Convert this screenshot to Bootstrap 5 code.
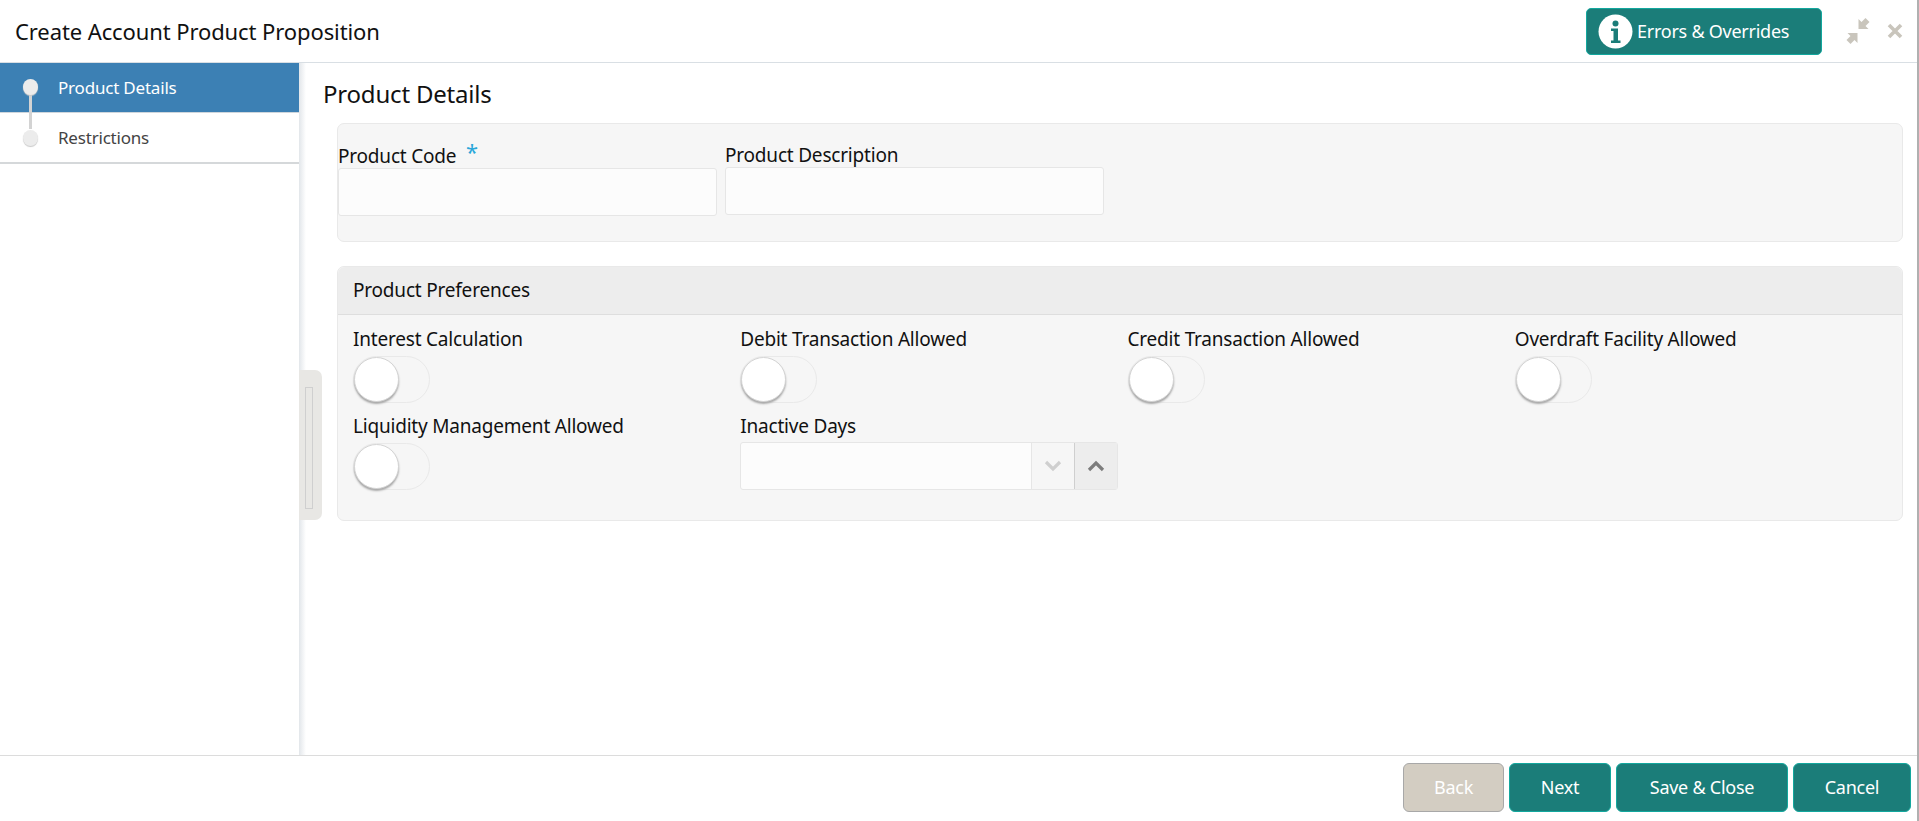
<!doctype html>
<html lang="en"><head><meta charset="utf-8"><title>Create Account Product Proposition</title>
<link rel="stylesheet" href="https://cdn.jsdelivr.net/npm/bootstrap@5.3.0/dist/css/bootstrap.min.css">
<style>
html,body{height:100%;overflow:hidden}
body{font-family:"Noto Sans","Open Sans",sans-serif;color:#111;background:#fff}
.shell{height:821px;border-right:2px solid #b0b0b0}
.top-bar{height:63px;border-bottom:1px solid #d9dfe4;padding:0 14px 0 15px}
.page-title{font-size:22px;line-height:1;margin:0;font-weight:400;letter-spacing:-.1px}
.err-btn{width:236px;height:47px;background:#1b7d79;border:1px solid #13a89e;border-radius:5px;color:#fff;font-size:18px;padding:0 0 0 11px;letter-spacing:-.25px}
.err-btn:hover{background:#1b7d79;color:#fff}
.win-btn{margin-left:23px}
.mid{height:692px}
.side{width:299px;flex:none}
.step{height:51px;padding-left:58px;font-size:17px;color:#444;letter-spacing:-.2px;position:relative}
.step-on{background:#3c80b4;color:#fff;height:50px;border-bottom:1px solid #cfd6dc}
.step-off{border-bottom:2px solid #d5d8da}
.dot{position:absolute;left:23px;top:16px;width:15px;height:16px;border-radius:50%;background:#ececec;box-shadow:0 1px 1px #c9c9c9;z-index:2}
.step-on .dot{top:16px}
.step-off .dot{top:17px}
.stem{position:absolute;left:29px;top:30px;width:3px;height:36px;background:#d3d3d3;z-index:1}
.rail{width:7px;flex:none;background:linear-gradient(90deg,#e2e6ea,#fff);position:relative}
.handle{position:absolute;left:0;top:307px;width:23px;height:150px;background:#e8e7e4;border-radius:0 7px 7px 0;z-index:3}
.handle i{position:absolute;left:6px;top:17px;width:8px;height:122px;border:1px solid #cfcfcf}
.main-area{padding:15px 14px 0 16px}
.main-head{font-size:24px;line-height:1;margin:4px 0 17px 1px;font-weight:400;letter-spacing:-.2px}
.pane{margin-left:15px;background:#f6f6f6;border:1px solid #e9e9e9;border-radius:7px;box-shadow:none}
.pane-one{height:119px;padding:0}
.pane-two{height:255px;margin-top:24px}
.pane-head{height:48px;background:#ededed;border-bottom:1px solid #dedede;padding:0 0 0 15px;font-size:19px;letter-spacing:-.2px;border-radius:7px 7px 0 0}
.fld-lab{font-size:19px;line-height:24px;color:#111;margin:0;letter-spacing:-.2px;display:block}
.fld-box{height:48px;width:379px;background:#fcfcfc;border:1px solid #e6e6e6;border-radius:3px}
.one-row{gap:8px;padding-top:19px}
.star{color:#2aa7d9;font-size:22px;line-height:1;margin-left:5px;position:relative;top:-3px}
.prefs{padding:12px 0 0 15px}
.cell{height:87px}
.tgl{width:77px;height:47px;margin-top:5px;border:1px solid #e9e9e9;border-radius:24px;position:relative}
.tgl i{position:absolute;left:0;top:0;width:45px;height:45px;border-radius:50%;background:#fff;border:1px solid #d4d4d4;box-shadow:0 2px 2px #a9a9a9}
.spin{width:378px;height:48px;margin-top:4px;background:#fcfcfc;border:1px solid #e6e6e6;border-radius:3px}
.spin-a,.spin-b{width:43px;flex:none;height:100%}
.spin-a{background:#f6f6f6;border-left:1px solid #e6e6e6}
.spin-b{background:#ededed;border-left:1px solid #cfcfcf}
.foot-bar{height:66px;border-top:1px solid #dcdcdc;padding:7px 6px 0 0;gap:5px}
.act{height:49px;background:#1b7d79;border:1px solid #13a89e;border-radius:6px;color:#fff;font-size:18px;padding:0;letter-spacing:-.25px}
.act:hover{background:#1b7d79;color:#fff}
.act:disabled{background:#d3cdc2;border-color:#a8a8a8;color:#fff;opacity:1}
</style></head>
<body>
<div class="shell d-flex flex-column">
  <header class="top-bar d-flex align-items-center justify-content-between">
    <h1 class="page-title">Create Account Product Proposition</h1>
    <div class="d-flex align-items-center">
      <button class="btn err-btn d-flex align-items-center gap-1" type="button">
        <svg width="35" height="35" viewBox="0 0 35 35" aria-hidden="true"><circle cx="17.5" cy="17.5" r="17" fill="#fff"/><circle cx="17.5" cy="9.5" r="3" fill="#1b7d79"/><path d="M13 14.5h7v12h2.5v2.5h-9.5v-2.5h2.500v-9.500h-2.500z" fill="#1b7d79"/></svg>
        <span>Errors &amp; Overrides</span>
      </button>
      <svg class="win-btn" width="26" height="26" viewBox="0 0 26 26" aria-hidden="true"><path d="M24.500 4 20.500 8l3 3h-10V1l3 3L20.500 0zM1.500 22l4-4-3-3h10v10l-3-3-4 4z" fill="#c9c5bc"/></svg>
      <svg style="margin-left:16px" width="16" height="16" viewBox="0 0 16 16" aria-hidden="true"><path d="M2 2l12 12M14 2 2 14" stroke="#c9c5bc" stroke-width="3.600" fill="none"/></svg>
    </div>
  </header>
  <div class="mid d-flex">
    <nav class="side">
      <div class="step step-on d-flex align-items-center"><span class="dot"></span><span class="stem"></span>Product Details</div>
      <div class="step step-off d-flex align-items-center"><span class="dot"></span>Restrictions</div>
    </nav>
    <div class="rail"><div class="handle"><i></i></div></div>
    <main class="main-area flex-grow-1">
      <h2 class="main-head">Product Details</h2>
      <section class="pane pane-one">
        <div class="d-flex one-row">
          <div><label class="fld-lab">Product Code <span class="star">*</span></label><div class="fld-box"></div></div>
          <div><label class="fld-lab">Product Description</label><div class="fld-box"></div></div>
        </div>
      </section>
      <section class="pane pane-two">
        <div class="pane-head d-flex align-items-center">Product Preferences</div>
        <div class="row g-0 prefs">
          <div class="col-3 cell"><span class="fld-lab">Interest Calculation</span><div class="tgl"><i></i></div></div>
          <div class="col-3 cell"><span class="fld-lab">Debit Transaction Allowed</span><div class="tgl"><i></i></div></div>
          <div class="col-3 cell"><span class="fld-lab">Credit Transaction Allowed</span><div class="tgl"><i></i></div></div>
          <div class="col-3 cell"><span class="fld-lab">Overdraft Facility Allowed</span><div class="tgl"><i></i></div></div>
          <div class="col-3 cell"><span class="fld-lab">Liquidity Management Allowed</span><div class="tgl"><i></i></div></div>
          <div class="col-3 cell"><span class="fld-lab">Inactive Days</span>
            <div class="spin d-flex justify-content-end">
              <div class="spin-a d-flex align-items-center justify-content-center"><svg width="18" height="12" viewBox="0 0 18 12" aria-hidden="true"><path d="M2 2l7 7 7-7" stroke="#cfcfcf" stroke-width="3.200" fill="none"/></svg></div>
              <div class="spin-b d-flex align-items-center justify-content-center"><svg width="18" height="12" viewBox="0 0 18 12" aria-hidden="true"><path d="M2 10l7-7 7 7" stroke="#7d7d7d" stroke-width="3.200" fill="none"/></svg></div>
            </div>
          </div>
        </div>
      </section>
    </main>
  </div>
  <footer class="foot-bar d-flex justify-content-end">
    <button class="btn act" style="width:101px" type="button" disabled>Back</button>
    <button class="btn act" style="width:102px" type="button">Next</button>
    <button class="btn act" style="width:172px" type="button">Save &amp; Close</button>
    <button class="btn act" style="width:118px" type="button">Cancel</button>
  </footer>
</div>
</body></html>
